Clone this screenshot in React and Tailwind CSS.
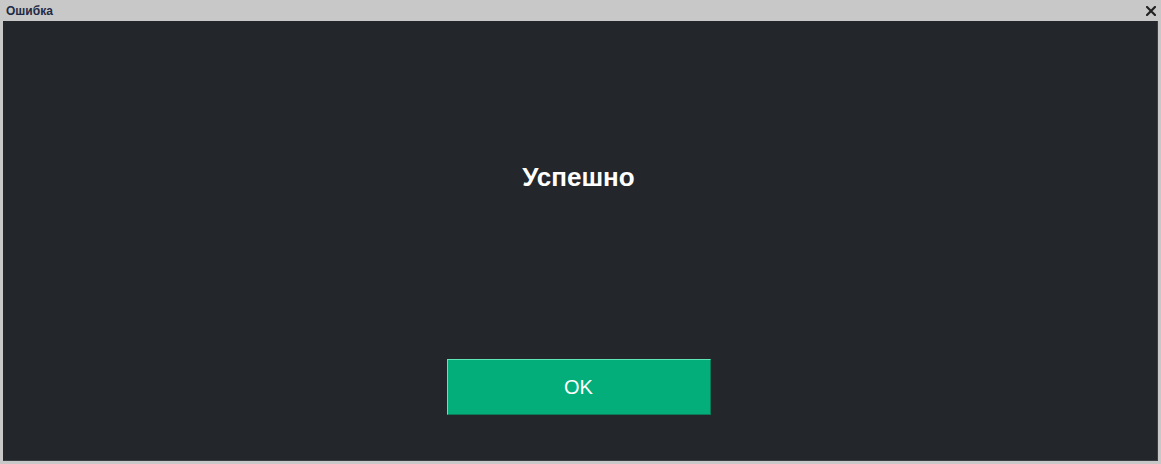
import React from 'react';

const App = () => (
  <div className="w-[1161px] h-[464px] bg-[#c8c8c8] flex flex-col font-['Liberation_Sans',Arial,sans-serif]">
    <div className="h-[21px] flex items-center justify-between pl-[6px] pr-[5px]">
      <span className="text-[12px] font-bold text-[#1f2a44] leading-none">Ошибка</span>
      <svg className="w-[10px] h-[10px]" viewBox="0 0 10 10">
        <path d="M1 1L9 9M9 1L1 9" stroke="#222" strokeWidth="2.2" strokeLinecap="square" />
      </svg>
    </div>
    <div className="flex-1 mx-[3px] mb-[3px] pr-[3px] bg-[#23262b] border-r border-b border-[#3a3d42] flex flex-col items-center">
      <h1 className="mt-[143px] text-[26px] font-bold text-white leading-none">Успешно</h1>
      <button
        type="button"
        className="mt-[169px] w-[264px] h-[56px] bg-[#03ae7a] border-l border-t border-l-[#5ce8b6] border-t-[#5ce8b6] border-r border-b border-r-[#0b7a55] border-b-[#0b7a55] text-white text-[20px] leading-none"
      >
        OK
      </button>
    </div>
  </div>
);

export default App;
